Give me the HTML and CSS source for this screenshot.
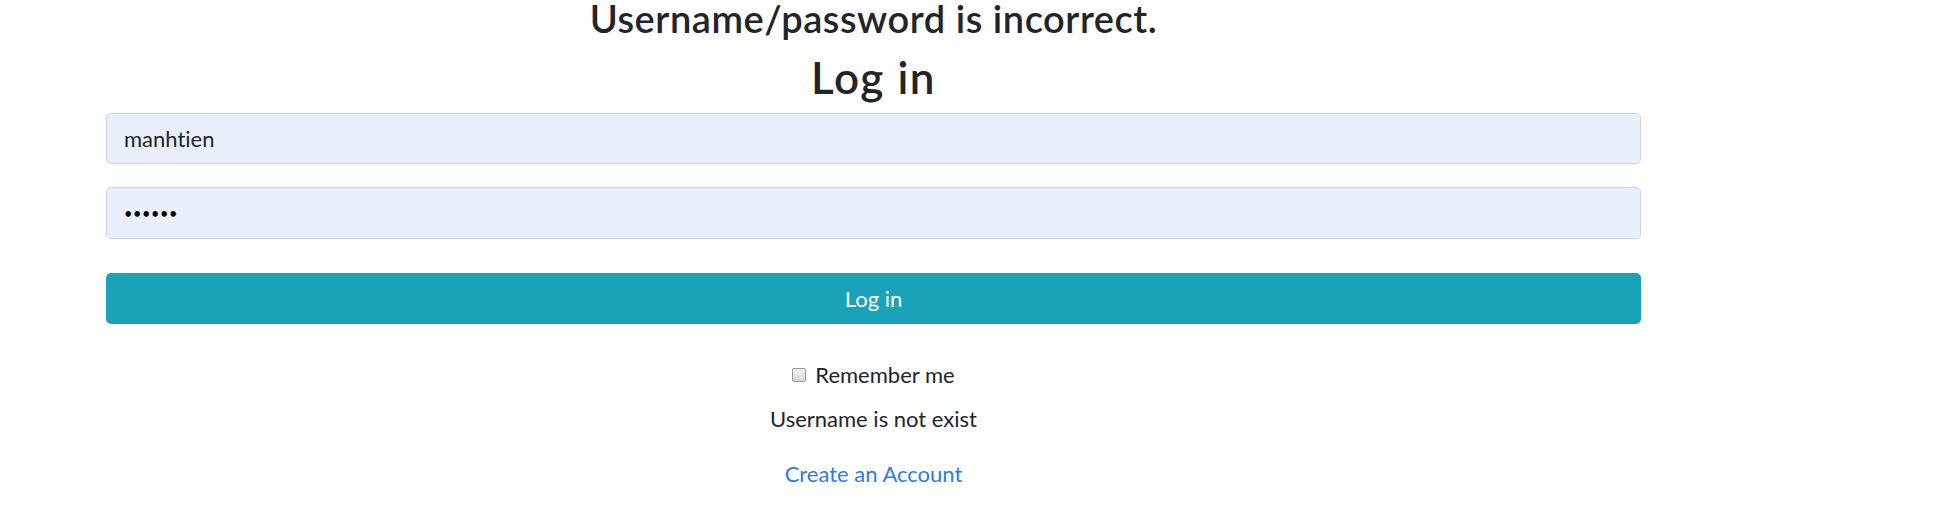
FILE: index.html
```html
<!DOCTYPE html>
<html lang="en">
<head>
<meta charset="utf-8">
<title>Log in</title>
<link rel="stylesheet" href="styles.css">
</head>
<body>
<div class="page">
  <h3 class="error-title">Username/password is incorrect.</h3>
  <h2 class="form-title">Log in</h2>
  <form class="login-form">
    <input class="field" type="text" value="manhtien">
    <input class="field field-pass" type="password" value="123456">
    <button class="btn-login" type="button">Log in</button>
    <div class="remember"><span class="check"></span>Remember me</div>
    <div class="message">Username is not exist</div>
    <div class="create"><a href="#" class="create-link">Create an Account</a></div>
  </form>
</div>
</body>
</html>
```
FILE: styles.css
```css
html, body {
  margin: 0;
  padding: 0;
  background: #ffffff;
}
body {
  font-family: "Lato", "Noto Sans", sans-serif;
  font-variant-ligatures: none;
  color: #212529;
  font-size: 22px;
}
.page {
  width: 1535px;
  margin-left: 106px;
}
.error-title {
  margin: 0;
  font-size: 38px;
  font-weight: 600;
  letter-spacing: 0.55px;
  line-height: 36px;
  text-align: center;
}
.form-title {
  margin: 15px 0 0;
  font-size: 44px;
  font-weight: 600;
  letter-spacing: 1.5px;
  line-height: 52px;
  text-align: center;
}
.login-form {
  display: flex;
  flex-direction: column;
  margin-top: 10px;
}
.field {
  box-sizing: border-box;
  height: 51px;
  width: 100%;
  margin: 0;
  padding: 0 17px;
  border: 1px solid #cdd4dd;
  border-radius: 5px;
  background: #e8f0fe;
  color: #212529;
  font-family: inherit;
  font-variant-ligatures: none;
  font-size: 22px;
  outline: none;
}
.field-pass {
  margin-top: 23px;
  height: 52px;
  font-size: 14.5px;
  letter-spacing: 0.6px;
  color: #000000;
}
.btn-login {
  box-sizing: border-box;
  margin-top: 34px;
  height: 51px;
  width: 100%;
  border: none;
  border-radius: 5px;
  background: #19a2b8;
  color: #ffffff;
  font-family: inherit;
  font-size: 22px;
  padding: 0;
}
.remember {
  margin-top: 35px;
  line-height: 32px;
  text-align: center;
}
.check {
  display: inline-block;
  box-sizing: border-box;
  width: 14px;
  height: 14px;
  margin: 0 9px 1px 0;
  border: 1px solid #9a9a9a;
  border-radius: 2px;
  background: linear-gradient(#f4f4f4, #d8d8d8);
  vertical-align: baseline;
}
.message {
  margin-top: 12px;
  line-height: 32px;
  text-align: center;
}
.create {
  margin-top: 23px;
  line-height: 32px;
  text-align: center;
}
.create-link {
  color: #2b7de3;
  text-decoration: none;
}
```
